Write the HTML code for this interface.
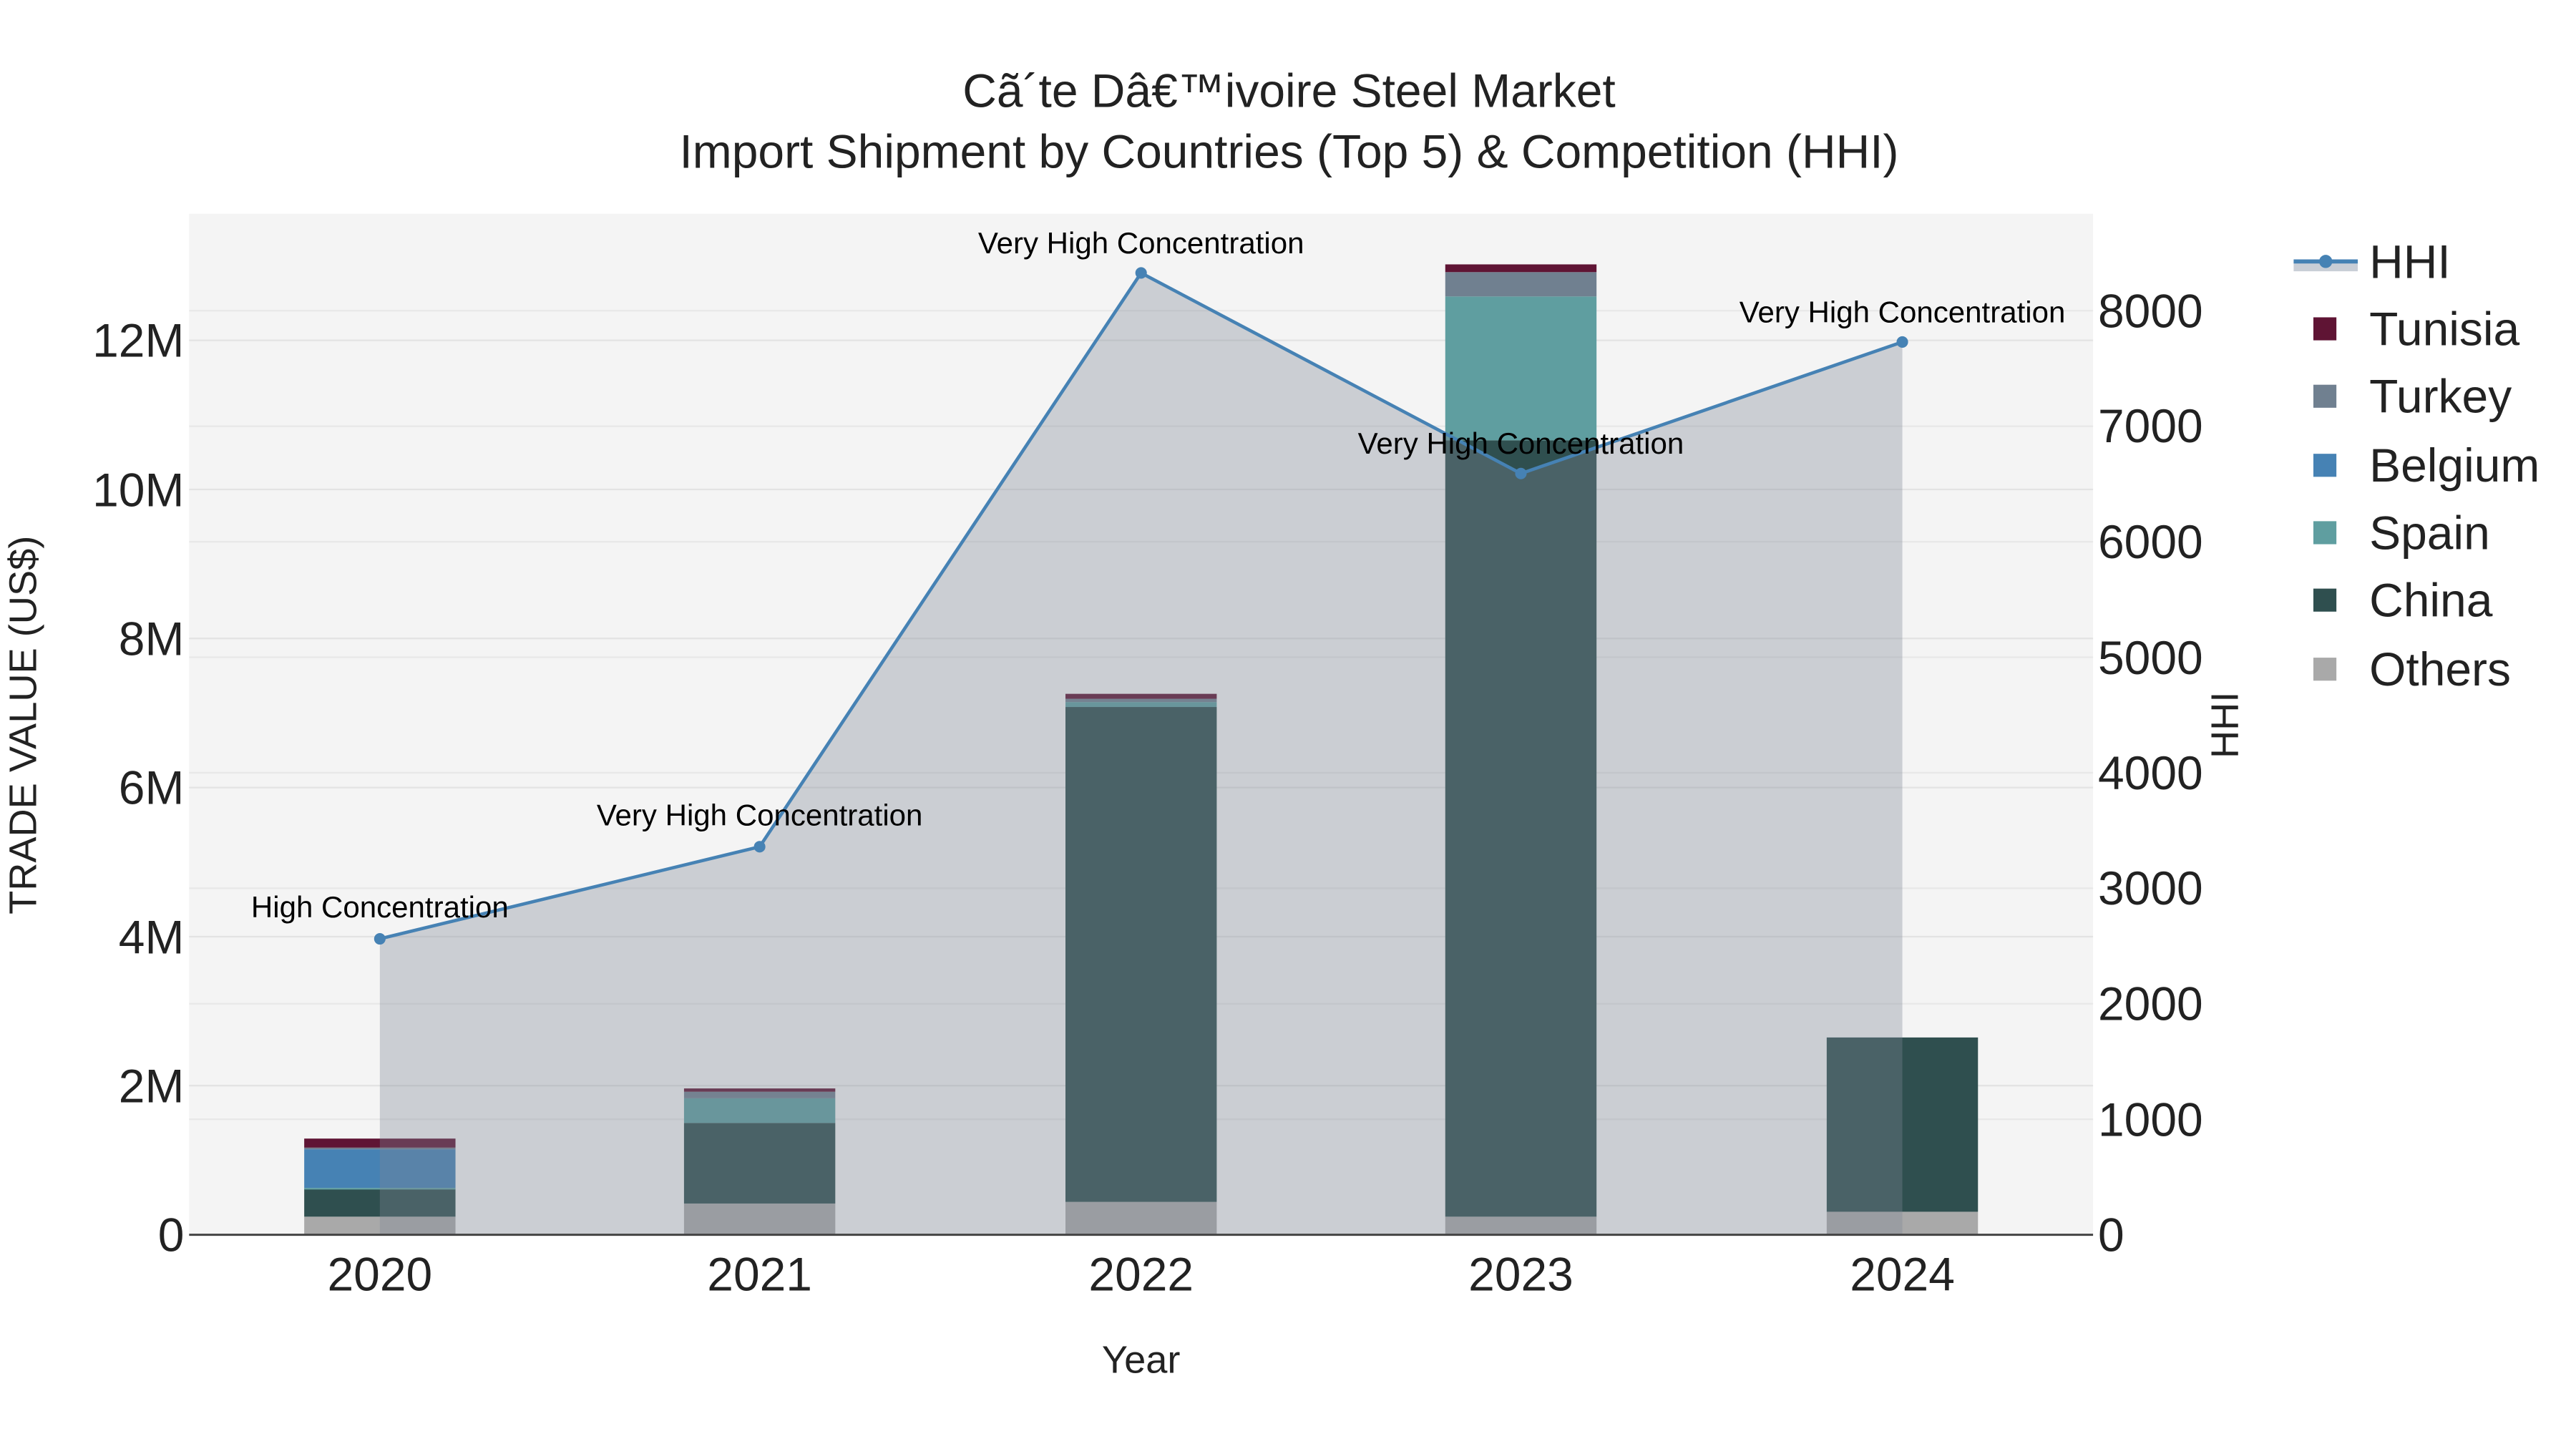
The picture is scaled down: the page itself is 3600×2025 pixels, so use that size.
<!DOCTYPE html>
<html><head><meta charset="utf-8"><style>
html,body{margin:0;padding:0;background:#fff;}
svg{display:block;}
text{font-family:"Liberation Sans",Arial,sans-serif;}
</style></head><body>
<svg width="3600" height="2025" viewBox="0 0 1566.7 881.3" xmlns="http://www.w3.org/2000/svg">
<rect x="0" y="0" width="1570" height="885" fill="#fff"/>
<rect x="115" y="130" width="1158" height="621" fill="#f4f4f4"/>
<g stroke="#e3e3e3" stroke-width="1">
<line x1="115" x2="1273" y1="660.3" y2="660.3"/><line x1="115" x2="1273" y1="569.7" y2="569.7"/>
<line x1="115" x2="1273" y1="479" y2="479"/><line x1="115" x2="1273" y1="388.3" y2="388.3"/>
<line x1="115" x2="1273" y1="297.7" y2="297.7"/><line x1="115" x2="1273" y1="207" y2="207"/>
</g>
<g stroke="#e8e8e8" stroke-width="1">
<line x1="115" x2="1273" y1="680.75" y2="680.75"/><line x1="115" x2="1273" y1="610.5" y2="610.5"/>
<line x1="115" x2="1273" y1="540.25" y2="540.25"/><line x1="115" x2="1273" y1="470" y2="470"/>
<line x1="115" x2="1273" y1="399.75" y2="399.75"/><line x1="115" x2="1273" y1="329.5" y2="329.5"/>
<line x1="115" x2="1273" y1="259.25" y2="259.25"/><line x1="115" x2="1273" y1="189" y2="189"/>
</g>
<g>
<rect x="185" y="740" width="92" height="11" fill="#a9a9a9"/>
<rect x="185" y="723" width="92" height="17" fill="#2f4f4f"/>
<rect x="185" y="722.5" width="92" height="1" fill="#5f9ea0"/>
<rect x="185" y="699" width="92" height="23.5" fill="#4682b4"/>
<rect x="185" y="698" width="92" height="1" fill="#708090"/>
<rect x="185" y="692.5" width="92" height="5.5" fill="#5f1434"/>
<rect x="416" y="732" width="92" height="19" fill="#a9a9a9"/>
<rect x="416" y="683" width="92" height="49" fill="#2f4f4f"/>
<rect x="416" y="668" width="92" height="15" fill="#5f9ea0"/>
<rect x="416" y="664" width="92" height="4" fill="#708090"/>
<rect x="416" y="662" width="92" height="2" fill="#5f1434"/>
<rect x="648" y="731" width="92" height="20" fill="#a9a9a9"/>
<rect x="648" y="430" width="92" height="301" fill="#2f4f4f"/>
<rect x="648" y="427" width="92" height="3" fill="#5f9ea0"/>
<rect x="648" y="425" width="92" height="2" fill="#708090"/>
<rect x="648" y="422" width="92" height="3" fill="#5f1434"/>
<rect x="879" y="740" width="92" height="11" fill="#a9a9a9"/>
<rect x="879" y="267.8" width="92" height="472.2" fill="#2f4f4f"/>
<rect x="879" y="180.3" width="92" height="87.5" fill="#5f9ea0"/>
<rect x="879" y="165.5" width="92" height="14.8" fill="#708090"/>
<rect x="879" y="160.8" width="92" height="4.7" fill="#5f1434"/>
<rect x="1111" y="737" width="92" height="14" fill="#a9a9a9"/>
<rect x="1111" y="631" width="92" height="106" fill="#2f4f4f"/>
</g>
<polygon points="231,571 462,515 694,166 925,288 1157,208 1157,751 231,751" fill="rgba(125,135,150,0.35)"/>
<line x1="115" x2="1273" y1="751" y2="751" stroke="#444" stroke-width="1.3"/>
<polyline points="231,571 462,515 694,166 925,288 1157,208" fill="none" stroke="#4682b4" stroke-width="2"/>
<g fill="#4682b4">
<circle cx="231" cy="571" r="3.5"/><circle cx="462" cy="515" r="3.5"/><circle cx="694" cy="166" r="3.5"/><circle cx="925" cy="288" r="3.5"/><circle cx="1157" cy="208" r="3.5"/>
</g>
<g font-size="18.3" fill="#000" text-anchor="middle">
<text x="231" y="558">High Concentration</text>
<text x="462" y="502">Very High Concentration</text>
<text x="694" y="154">Very High Concentration</text>
<text x="925" y="276">Very High Concentration</text>
<text x="1157" y="196">Very High Concentration</text>
</g>
<g font-size="28.7" fill="#222" text-anchor="end">
<text x="112" y="761">0</text>
<text x="112" y="670.5">2M</text>
<text x="112" y="580">4M</text>
<text x="112" y="489">6M</text>
<text x="112" y="398.5">8M</text>
<text x="112" y="308">10M</text>
<text x="112" y="217">12M</text>
</g>
<g font-size="28.7" fill="#222" text-anchor="start">
<text x="1276" y="761">0</text>
<text x="1276" y="691">1000</text>
<text x="1276" y="620.5">2000</text>
<text x="1276" y="550">3000</text>
<text x="1276" y="480">4000</text>
<text x="1276" y="410">5000</text>
<text x="1276" y="339.5">6000</text>
<text x="1276" y="269">7000</text>
<text x="1276" y="199">8000</text>
</g>
<g font-size="28.7" fill="#222" text-anchor="middle">
<text x="231" y="785">2020</text>
<text x="462" y="785">2021</text>
<text x="694" y="785">2022</text>
<text x="925" y="785">2023</text>
<text x="1157" y="785">2024</text>
</g>
<text x="694" y="835" font-size="23.6" fill="#222" text-anchor="middle">Year</text>
<text transform="translate(22,441) rotate(-90)" font-size="23.6" fill="#222" text-anchor="middle">TRADE VALUE (US$)</text>
<text transform="translate(1361,441) rotate(-90)" font-size="23.6" fill="#222" text-anchor="middle">HHI</text>
<g font-size="28.7" fill="#222" text-anchor="middle">
<text x="784" y="65">Cã´te Dâ€™ivoire Steel Market</text>
<text x="784" y="102">Import Shipment by Countries (Top 5) &amp; Competition (HHI)</text>
</g>
<rect x="1395" y="159" width="39" height="6" fill="#c9ced6"/>
<line x1="1395" x2="1434" y1="159" y2="159" stroke="#4682b4" stroke-width="2.5"/>
<circle cx="1414.5" cy="159" r="4" fill="#4682b4"/>
<rect x="1407" y="193" width="14" height="14" fill="#5f1434"/>
<rect x="1407" y="234" width="14" height="14" fill="#708090"/>
<rect x="1407" y="276" width="14" height="14" fill="#4682b4"/>
<rect x="1407" y="317" width="14" height="14" fill="#5f9ea0"/>
<rect x="1407" y="358" width="14" height="14" fill="#2f4f4f"/>
<rect x="1407" y="400" width="14" height="14" fill="#a9a9a9"/>
<g font-size="28.7" fill="#222">
<text x="1441" y="169">HHI</text>
<text x="1441" y="210">Tunisia</text>
<text x="1441" y="251">Turkey</text>
<text x="1441" y="293">Belgium</text>
<text x="1441" y="334">Spain</text>
<text x="1441" y="375">China</text>
<text x="1441" y="417">Others</text>
</g>
</svg>
</body></html>
